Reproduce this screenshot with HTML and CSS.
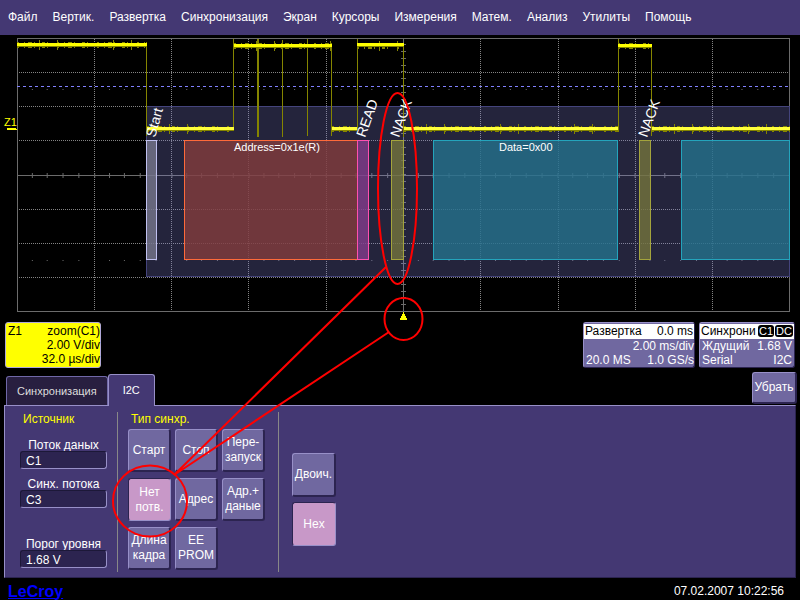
FILE: index.html
```
<!DOCTYPE html>
<html lang="ru">
<head>
<meta charset="utf-8">
<title>LeCroy</title>
<link rel="stylesheet" href="styles.css">
</head>
<body>
<nav class="menu">
  <a href="#">Файл</a><a href="#">Вертик.</a><a href="#">Развертка</a><a href="#">Синхронизация</a><a href="#">Экран</a><a href="#">Курсоры</a><a href="#">Измерения</a><a href="#">Матем.</a><a href="#">Анализ</a><a href="#">Утилиты</a><a href="#">Помощь</a>
</nav>
<main>
<svg class="scope" viewBox="0 35 800 285">
  <defs>
    <pattern id="ticks" x="17" y="173" width="77.2" height="5" patternUnits="userSpaceOnUse">
      <path class="grid" d="M.5 0v5M15.5 0v5M30.5 0v5M46.5 0v5M61.5 0v5"/>
    </pattern>
    <pattern id="dots" x="17" y="0" width="77.2" height="171" patternUnits="userSpaceOnUse">
      <path class="grid" d="M15 89.500h1M30 89.500h1M46 89.500h1M61 89.500h1"/>
    </pattern>
  </defs>
  <g class="grid">
    <rect x="17.500" y="38.500" width="772" height="273"/>
    <path class="dotted" d="M94.500 39V311M171.500 39V311M248.500 39V311M326.500 39V311M480.500 39V311M558.500 39V311M635.500 39V311M712.500 39V311"/>
    <path class="dotted" d="M19 72.500H789M19 106.500H789M19 140.500H789M19 209.500H789M19 243.500H789M19 277.500H789"/>
    <path d="M17 175.500H789M403.500 39V311"/>
    <path class="center-ticks" d="M403.500 44V308"/>
  </g>
  <rect x="18" y="173" width="771" height="5" fill="url(#ticks)"/>
  <rect x="18" y="89" width="771" height="1" fill="url(#dots)"/>
  <rect x="18" y="260" width="771" height="1" fill="url(#dots)"/>
  <path class="level" d="M17 86.500H789"/>

  <rect class="frame" x="146.500" y="106.500" width="643" height="170"/>
  <g class="edges">
    <path d="M146.500 42V136M233.500 39V130M282.500 40V137M307.500 39V136M331.500 44V136M357.500 39V130M403.500 43V137M618.500 39V132M651.500 44V136"/>
    <path class="wide" d="M258 39V134M257.500 130V137"/>
  </g>
  <g class="halo">
    <path d="M17 45H147M234 46H332M357 45H404M618 46H652M147 129H234M332 129H357M404 129H618M652 129H790"/>
  </g>
  <g class="noise">
    <path d="M17 45H147M234 46H332M357 46H404M618 46H652M147 129H234M332 129H357M404 129H618M652 129H790"/>
    <path class="spikes" d="M17 45H147M234 46H332M357 46H404M147 129H234M404 129H618M652 129H790"/>
  </g>
  <g class="trace">
    <path d="M17 44.500H147M234 45.500H332M357 44.500H404M618 45.500H652"/>
    <path class="shaded" d="M147 128.500H234M332 128.500H357M404 128.500H618M652 128.500H790"/>
  </g>

  <g class="decode">
    <rect class="start" x="146.500" y="140.500" width="10" height="119"/>
    <rect class="address" x="184.500" y="140.500" width="173" height="119"/>
    <rect class="read" x="357.500" y="140.500" width="11" height="119"/>
    <rect class="nack" x="391.500" y="140.500" width="12" height="119"/>
    <rect class="data" x="433.500" y="140.500" width="184" height="119"/>
    <rect class="nack" x="639.500" y="140.500" width="11" height="119"/>
    <rect class="data" x="681.500" y="140.500" width="108" height="119"/>
  </g>
  <g class="labels">
    <text x="234" y="151">Address=0x1e(R)</text>
    <text x="499" y="151">Data=0x00</text>
    <text class="event" transform="translate(155 138) rotate(-74)">Start</text>
    <text class="event" transform="translate(365 138) rotate(-70)">READ</text>
    <text class="event" transform="translate(399 138) rotate(-70)">NACK</text>
    <text class="event" transform="translate(647 138) rotate(-70)">NACK</text>
  </g>
  <text class="channel" x="4" y="126">Z1</text>
  <path class="marker" d="M7 128H16V129H17V130H7ZM403 312h1v2h1v2h1v2h1v2h-7v-2h1v-2h1v-2h1z"/>
</svg>

<section class="status">
  <div class="box zoom">
    <p><span>Z1</span><span>zoom(C1)</span></p>
    <p class="end">2.00 V/div</p>
    <p class="end">32.0 µs/div</p>
  </div>
  <div class="box timebase">
    <p class="title"><span>Развертка</span><span>0.0 ms</span></p>
    <p class="end">2.00 ms/div</p>
    <p><span>20.0 MS</span><span>1.0 GS/s</span></p>
  </div>
  <div class="box trigger">
    <p class="title"><span>Синхрони</span><span class="badges"><b>C1</b><b>DC</b></span></p>
    <p><span>Ждущий</span><span>1.68 V</span></p>
    <p><span>Serial</span><span>I2C</span></p>
  </div>
</section>

<div class="tabs">
  <button class="tab">Синхронизация</button>
  <button class="tab active">I2C</button>
  <button class="key close">Убрать</button>
</div>

<section class="panel">
  <form class="source">
    <h2>Источник</h2>
    <label for="data">Поток даных</label>
    <input id="data" value="C1">
    <label for="clock">Синх. потока</label>
    <input id="clock" value="C3">
    <label class="apart" for="threshold">Порог уровня</label>
    <input id="threshold" value="1.68 V">
  </form>
  <div class="types">
    <h2>Тип синхр.</h2>
    <div class="keys">
      <button class="key">Старт</button>
      <button class="key">Стоп</button>
      <button class="key">Пере-<br>запуск</button>
      <button class="key on">Нет<br>потв.</button>
      <button class="key">Адрес</button>
      <button class="key">Адр.+<br>даные</button>
      <button class="key">Длина<br>кадра</button>
      <button class="key">EE<br>PROM</button>
    </div>
  </div>
  <div class="radix">
    <button class="key">Двоич.</button>
    <button class="key on">Hex</button>
  </div>
</section>
</main>
<footer>
  <span class="logo">LeCroy</span>
  <time>07.02.2007 10:22:56</time>
</footer>
<svg class="notes" viewBox="0 0 800 600">
  <ellipse cx="397.500" cy="188.500" rx="19.500" ry="95.500"/>
  <ellipse cx="403.500" cy="319" rx="19" ry="21"/>
  <ellipse cx="150" cy="501" rx="37" ry="35.500"/>
  <path d="M386 267L174 475L389 332"/>
</svg>
</body>
</html>
```
FILE: styles.css
```
* {
  box-sizing: border-box;
}

body {
  position: relative;
  margin: 0;
  min-height: 100vh;
  background: #000;
  color: #fff;
  font: 12px/15px "Liberation Sans", Arial, sans-serif;
  overflow-x: hidden;
}

p, h2 {
  margin: 0;
}

button, input {
  font: inherit;
  color: inherit;
}

.menu {
  display: flex;
  gap: 15px;
  height: 35px;
  padding: 10px 8px;
  background: #443873;
}

.menu a {
  color: #fff;
  text-decoration: none;
}

.scope {
  display: block;
  width: 100%;
}

.scope path, .scope rect {
  shape-rendering: crispEdges;
}

.grid {
  fill: none;
  stroke: #6c6c6c;
}

.dotted {
  stroke-dasharray: 1 1;
  stroke: #848484;
}

.center-ticks {
  stroke-width: 5;
  stroke-dasharray: 1 5.850;
}

.level {
  stroke: #8080ff;
  stroke-dasharray: 3 3;
}

.edges, .halo, .noise, .trace {
  fill: none;
  stroke: #858500;
}

.edges .wide {
  stroke-width: 2;
}

.halo {
  stroke-width: 4;
}

.noise {
  stroke-width: 6;
  stroke-dasharray: 2 5 1 3 4 2 1 7 3 2 1 9;
}

.noise .spikes {
  stroke-width: 10;
  stroke-dasharray: 0 22 1 17 1 33;
}

.trace {
  stroke: #ff0;
  stroke-width: 3;
}

.trace .shaded {
  stroke: #ffff3c;
}

.frame {
  fill: #8080d8;
  fill-opacity: .28;
  stroke: #44447c;
}

.start {
  fill: #77778c;
  stroke: #c0c0f0;
}

.address {
  fill: #833c3c;
  stroke: #ff6a3a;
}

.read {
  fill: #833c8c;
  stroke: #ff50b0;
}

.nack {
  fill: #74743c;
  stroke: #a4a43c;
}

.data {
  fill: #24728c;
  stroke: #24a4bc;
}

.decode rect {
  fill-opacity: .8;
}

.labels {
  fill: #fff;
  font-size: 11px;
}

.labels .event {
  font-size: 14px;
}

.channel {
  fill: #ff0;
  font-size: 11px;
}

.marker {
  fill: #ff0;
}

.status {
  display: flex;
  gap: 4px;
  padding: 2px 5px 0;
}

.box {
  width: 96px;
  height: 46px;
  padding: 1px 2px;
  border: 1px solid #9890c8;
  border-right-color: #2c2450;
  border-bottom-color: #2c2450;
  border-radius: 3px;
  background: #7068a0;
  white-space: nowrap;
}

.box p {
  display: flex;
  justify-content: space-between;
  height: 14px;
}

.box .title {
  height: 15px;
  margin: 0 -2px;
  padding: 0 1px;
  background: #fff;
  color: #000;
}

.box .end {
  justify-content: flex-end;
}

.zoom {
  margin-right: auto;
  background: #ff0;
  border-color: #b0a8d8;
  color: #000;
  padding-right: 0;
}

.timebase {
  width: 112px;
  padding-right: 0;
}

.timebase .title {
  margin-right: 0;
}

.badges {
  display: flex;
  gap: 1px;
  padding-top: 1px;
}

.badges b {
  padding: 0 1px;
  height: 12px;
  border-radius: 3px;
  background: #000;
  color: #fff;
  font-weight: normal;
  font-size: 11px;
  line-height: 12px;
}

.tabs {
  display: flex;
  align-items: flex-end;
  height: 37px;
  padding: 0 3px 0 6px;
}

.tab {
  height: 29px;
  padding: 0 10px;
  border: 1px solid #7068a8;
  border-bottom: 0;
  border-radius: 3px 3px 0 0;
  background: #281f40;
  color: #ddd;
  font-size: 11px;
}

.tab.active {
  position: relative;
  height: 32px;
  padding: 0 14px;
  margin-bottom: -1px;
  border-color: #9890c8;
  background: #443873;
  color: #fff;
}

.key {
  width: 43px;
  height: 43px;
  padding: 0;
  border: 1px solid #9890c8;
  border-right: 2px solid #2c2450;
  border-bottom: 2px solid #2c2450;
  border-radius: 3px;
  background: #7068a0;
  white-space: nowrap;
}

.key.on {
  border-color: #2c2450 #9890c8 #9890c8 #2c2450;
  border-width: 1px;
  background: #c898c8;
}

.close {
  width: 45px;
  height: 32px;
  margin: 0 0 1px auto;
}

.panel {
  display: flex;
  margin: 0 4px;
  height: 173px;
  padding: 6px 0 5px;
  border: 1px solid #9890c8;
  border-right-color: #2c2450;
  border-bottom-color: #2c2450;
  background: #443873;
}

h2 {
  color: #ff0;
  font: inherit;
}

.source {
  display: flex;
  flex-direction: column;
  width: 113px;
  padding: 0 10px 0 15px;
  border-right: 1px solid #888;
}

.source h2 {
  padding-left: 3px;
  margin-bottom: 11px;
}

.source label {
  text-align: center;
}

.source input {
  width: 100%;
  height: 18px;
  margin: -2px 0 8px;
  padding: 3px 5px 1px;
  border: 1px solid #1c1838;
  border-right-color: #9890c8;
  border-bottom-color: #9890c8;
  border-radius: 3px;
  background: #2c2450;
}

.source .apart {
  margin-top: 21px;
}

.types {
  width: 161px;
  padding-left: 10px;
  border-right: 1px solid #888;
}

.types h2 {
  padding-left: 3px;
  margin-bottom: 2px;
}

.keys {
  display: grid;
  grid-template-columns: repeat(3, 43px);
  gap: 6px 4px;
}

.radix {
  display: flex;
  flex-direction: column;
  gap: 5px;
  padding: 41px 13px 0;
}

.radix .key {
  width: 44px;
  height: 44px;
}

footer {
  display: flex;
  justify-content: space-between;
  align-items: center;
  height: 22px;
  padding: 4px 16px 0 6px;
}

.logo {
  padding: 0 2px;
  color: #00f;
  font-size: 16px;
  font-weight: bold;
  text-decoration: underline;
}

.notes {
  position: absolute;
  top: 0;
  left: 0;
  width: 100%;
  pointer-events: none;
  fill: none;
  stroke: #f00;
  stroke-width: 2;
}
```
